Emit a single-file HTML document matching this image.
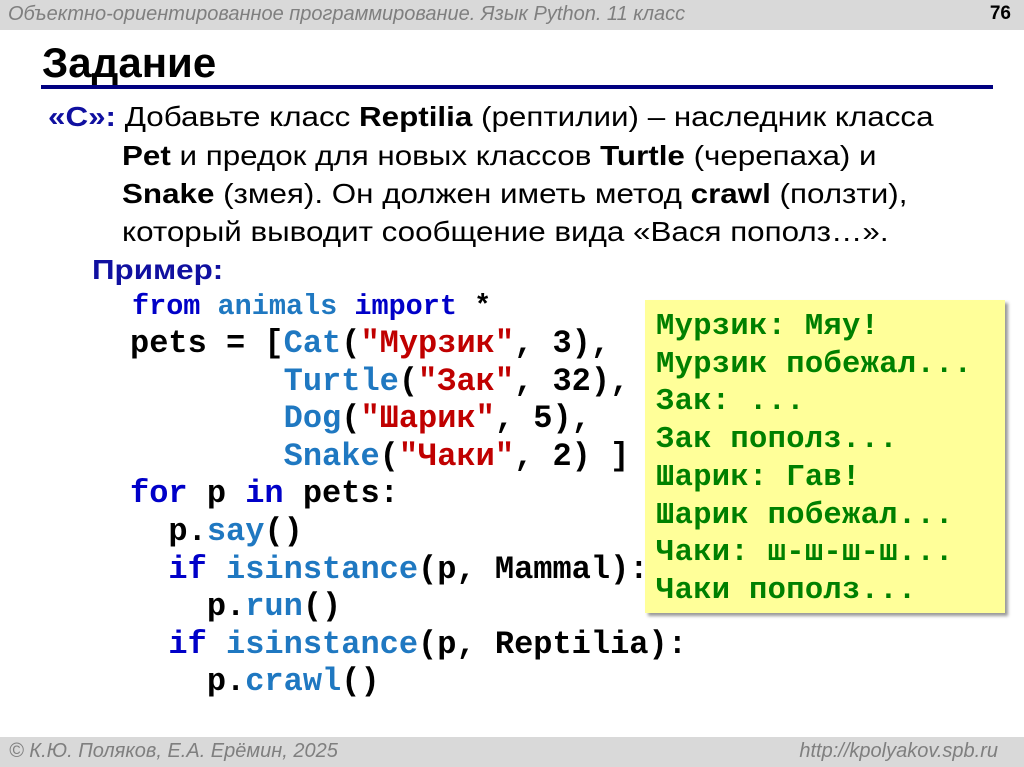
<!DOCTYPE html>
<html><head><meta charset="utf-8"><style>
*{margin:0;padding:0}
body{width:1024px;height:767px;position:relative;background:#fff;overflow:hidden;font-family:"Liberation Sans",Arial,sans-serif}
.hd{position:absolute;left:0;top:0;width:1024px;height:30px;background:#d9d9d9}
.hd .t{position:absolute;left:8px;top:3px;font-size:20px;font-style:italic;color:#7f7f7f}
.hd .n{position:absolute;right:13px;top:3px;font-size:19px;font-weight:bold;color:#000}
.title{position:absolute;left:42px;top:39px;font-size:42px;font-weight:bold;color:#000}
.rule{position:absolute;left:41px;top:85px;width:952px;height:4px;background:#000080}
.tx{position:absolute;font-size:28px;color:#000;white-space:nowrap;line-height:38px;transform:scaleX(1.12);transform-origin:left}
.bl{color:#1010a0;font-weight:bold}
.code{position:absolute;font-family:"Liberation Mono","Courier New",monospace;font-weight:bold;font-size:32px;white-space:pre;line-height:37.6px;color:#000}
.k{color:#0000c8}.f{color:#1f78c1}.s{color:#c00000}
.box{position:absolute;left:645px;top:300px;width:360px;height:313px;background:#ffff99;box-shadow:3px 3px 3px #999}
.out{position:absolute;left:656px;top:309px;font-family:"Liberation Mono","Courier New",monospace;font-weight:bold;font-size:30.5px;white-space:pre;line-height:37.7px;color:#008000;letter-spacing:0.3px}
.ft{position:absolute;left:0;top:737px;width:1024px;height:30px;background:#d9d9d9}
.ft span{position:absolute;top:3px;font-size:20px;font-style:italic;color:#7f7f7f}
</style></head><body>
<div class="hd"><div class="t">Объектно-ориентированное программирование. Язык Python. 11 класс</div><div class="n">76</div></div>
<div class="title">Задание</div>
<div class="rule"></div>
<div class="tx" style="left:48px;top:98px"><span class="bl">«С»:</span> Добавьте класс <b>Reptilia</b> (рептилии) – наследник класса</div>
<div class="tx" style="left:122px;top:137px"><b>Pet</b> и предок для новых классов <b>Turtle</b> (черепаха) и</div>
<div class="tx" style="left:122px;top:175px"><b>Snake</b> (змея). Он должен иметь метод <b>crawl</b> (ползти),</div>
<div class="tx" style="left:122px;top:213px">который выводит сообщение вида «Вася пополз…».</div>
<div class="tx" style="left:92px;top:251px"><span class="bl">Пример:</span></div>
<div class="code" style="left:132px;top:288px;font-size:28.5px"><span class="k">from</span> <span class="f">animals</span> <span class="k">import</span> *</div>
<div class="code" style="left:130px;top:325px">pets = [<span class="f">Cat</span>(<span class="s">"Мурзик"</span>, 3),
        <span class="f">Turtle</span>(<span class="s">"Зак"</span>, 32),
        <span class="f">Dog</span>(<span class="s">"Шарик"</span>, 5),
        <span class="f">Snake</span>(<span class="s">"Чаки"</span>, 2) ]
<span class="k">for</span> p <span class="k">in</span> pets:
  p.<span class="f">say</span>()
  <span class="k">if</span> <span class="f">isinstance</span>(p, Mammal):
    p.<span class="f">run</span>()
  <span class="k">if</span> <span class="f">isinstance</span>(p, Reptilia):
    p.<span class="f">crawl</span>()</div>
<div class="box"></div>
<div class="out">Мурзик: Мяу!
Мурзик побежал...
Зак: ...
Зак пополз...
Шарик: Гав!
Шарик побежал...
Чаки: ш-ш-ш-ш...
Чаки пополз...</div>
<div class="ft"><span style="left:9px">© К.Ю. Поляков, Е.А. Ерёмин, 2025</span><span style="right:26px">http://kpolyakov.spb.ru</span></div>
</body></html>
